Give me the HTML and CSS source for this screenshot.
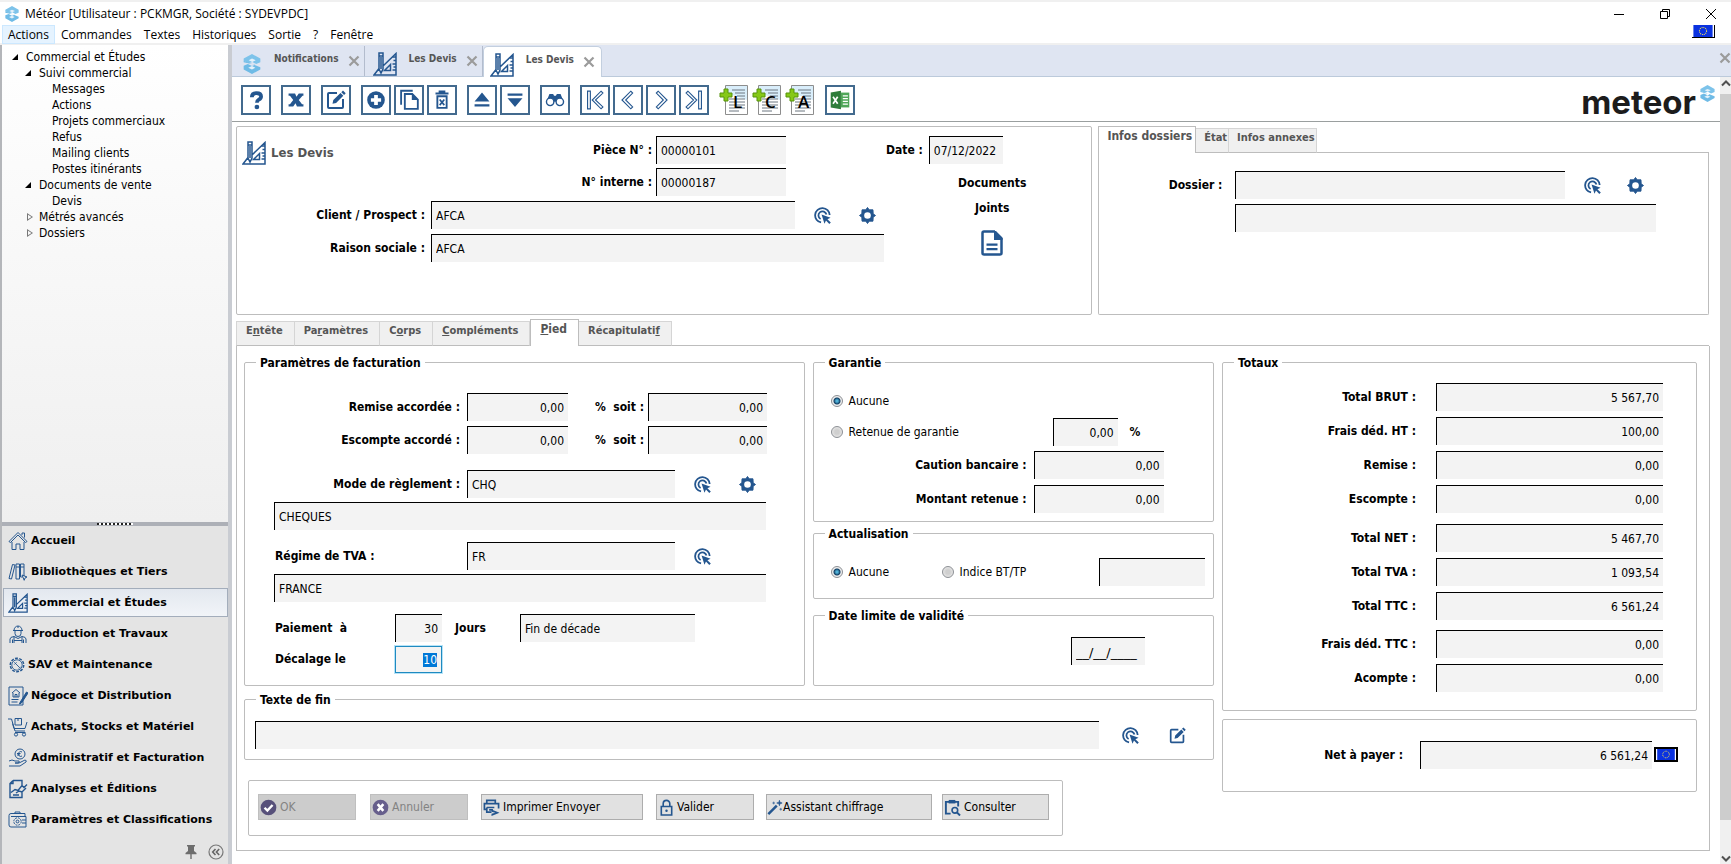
FILE: index.html
```html
<!DOCTYPE html>
<html lang="fr">
<head>
<meta charset="utf-8">
<title>Météor</title>
<link rel="stylesheet" href="styles.css">
</head>
<body>
<svg class="sprite" aria-hidden="true">
  <symbol id="logo" viewBox="0 0 24 24"><path d="M12 0 22 5.500V10L17 12 12.500 9.500 8 11 2 8V5.500Z" fill="#7dc3ea"/><path d="M2 8 22 16v2.500L12 24 2 18.500V14l5-2 5 2.500 4-1.500L2 10Z" fill="#6fbbe6"/><path d="M8 7.500 12 5.500 16.500 7.500 12.300 9.500ZM7.500 16.500 12 14.500 16 16.500 12 18.600Z" fill="#e4f1fa"/></symbol>
  <symbol id="square" viewBox="0 0 24 24"><g fill="none" stroke="#24568f" stroke-width="1.500"><path d="M6 1h4v16l-2 4-2-4ZM6 4h4M8 5v12M6 16.500 1 23h22V1.500L10 14"/><path d="M17.500 12.500v6h-6Z"/><path d="M19.500 5H23M20.500 8.500H23M19.500 12H23M20.500 15H23M19.500 18H23"/></g></symbol>
  <symbol id="cross" viewBox="0 0 12 12"><path d="M1.500 1.500l9 9M10.500 1.500l-9 9" stroke="#9b9b9b" stroke-width="2.200" fill="none"/></symbol>
  <symbol id="pick" viewBox="0 0 18 18"><g fill="none" stroke="#24568f" stroke-width="1.900"><path d="M7.500 16.400A7.700 7.700 0 1 1 16.600 8.500"/><path d="M7 12.700A4.300 4.300 0 1 1 13.200 8"/></g><path d="M8 8l9.500 3.300-3.300 1.600 3.600 3.600-1.600 1.500-3.500-3.600-1.600 3.300Z" fill="#24568f"/></symbol>
  <symbol id="gear" viewBox="0 0 18 18"><path d="M9 .5 10.800 3 14.800 3 15 7.200 17.500 9 15 10.800 14.800 15 10.800 15 9 17.500 7.200 15 3.200 15 3 10.800.5 9 3 7.200 3.200 3 7.200 3Z" fill="#24568f" stroke="#24568f" stroke-linejoin="round"/><circle cx="9" cy="9" r="3.500" fill="#fff"/></symbol>
  <symbol id="edit" viewBox="0 0 20 20"><path d="M11 3H3q-1 0-1 1v13q0 1 1 1h13q1 0 1-1V9" fill="none" stroke="#24568f" stroke-width="2"/><path d="M6.500 13.800l.8-3.700L14.500 3l2.800 2.800-7.200 7.200ZM15.300 2.200 17 .6l2.700 2.700-1.600 1.700Z" fill="#24568f"/></symbol>
  <symbol id="flag" viewBox="0 0 24 15"><path fill="#0a32e0" d="M0 0h24v15H0z"/><circle cx="12" cy="7.500" r="4.500" fill="none" stroke="#ffe94a" stroke-width="1.300" stroke-dasharray="1.200 1.156"/></symbol>
  <symbol id="sheet" viewBox="0 0 30 30"><path d="M6.500.5h22v29h-22z" fill="#fff" stroke="#8d8d8d"/><path d="M7 1h21v14L7 8Z" fill="#d9eefb"/><path d="M13 5h13M16 8h10M18 11h8M10 14h16M10 17h16M10 20h16M10 23h16M10 26h10" stroke="#6c7780"/><path d="M5 4h4v4h4v4H9v4H5v-4H1V8h4Z" fill="#86c818" stroke="#57930c"/></symbol>
</svg>

<header class="titlebar">
  <div class="titlebar-left">
    <div class="caption"><svg class="i16"><use href="#logo"/></svg><span>Météor [Utilisateur : PCKMGR, Société : SYDEVPDC]</span></div>
    <nav class="menubar" aria-label="Menu">
      <a class="on" href="#">Actions</a><a href="#">Commandes</a><a href="#">Textes</a><a href="#">Historiques</a><a href="#">Sortie</a><a href="#">?</a><a href="#">Fenêtre</a>
    </nav>
  </div>
  <div class="titlebar-right">
    <div class="winctl">
      <button aria-label="Réduire"><svg viewBox="0 0 12 12"><path d="M1 6.500h10" stroke="#000"/></svg></button>
      <button aria-label="Restaurer"><svg viewBox="0 0 12 12"><path d="M1.500 3.500h7v7h-7zM3.500 3.500v-2h7v7h-2" fill="none" stroke="#000"/></svg></button>
      <button aria-label="Fermer"><svg viewBox="0 0 12 12"><path d="M1 1l10 10M11 1 1 11" stroke="#000" fill="none"/></svg></button>
    </div>
    <svg class="euro-flag"><use href="#flag"/></svg>
  </div>
</header>

<div class="workspace">
  <aside class="sidebar">
    <ul class="tree">
      <li class="l0 open">Commercial et Études</li>
      <li class="l1 open">Suivi commercial</li>
      <li class="l2">Messages</li>
      <li class="l2">Actions</li>
      <li class="l2">Projets commerciaux</li>
      <li class="l2">Refus</li>
      <li class="l2">Mailing clients</li>
      <li class="l2">Postes itinérants</li>
      <li class="l1 open">Documents de vente</li>
      <li class="l2">Devis</li>
      <li class="l1 shut">Métrés avancés</li>
      <li class="l1 shut">Dossiers</li>
    </ul>
    <div class="grip"><span></span></div>
    <nav class="modules" aria-label="Modules">
      <a href="#"><svg viewBox="0 0 20 20"><path d="M1 10.500 10 1.500l9 9-1.500 1L10 4l-7.500 7.500ZM4 11v7.500h4V13h4v5.500h4V11M14 4V2h2.500v4.500"/></svg>Accueil</a>
      <a href="#"><svg viewBox="0 0 20 20"><path d="M4.500 2.500 7 3 3.500 17 1 16.500ZM8 2h3.500v15H8zM12.500 2H16v12M12.500 2v13h2M8 5h3.500M12.500 5H16M14 13l5 2-2 1-.8 2.300Z"/></svg>Bibliothèques et Tiers</a>
      <a class="on" href="#"><svg><use href="#square"/></svg>Commercial et Études</a>
      <a href="#"><svg viewBox="0 0 20 20"><path d="M6 6.500a4 4.500 0 0 1 8 0ZM5 6.500h10M7 7v2.500a3 3 0 0 0 6 0V7M10 2v2M2 19v-4q0-2 4-2.500l4 2 4-2q4 .5 4 2.500v4M6 12.500V19M14 12.500V19M6 16.500h8M4.500 15.500V19M15.500 15.500V19"/></svg>Production et Travaux</a>
      <a class="tight" href="#"><svg viewBox="0 0 20 20"><circle cx="10" cy="10" r="7.500" stroke-dasharray="3.200 1.500" stroke-width="1.600"/><circle cx="10" cy="10" r="5.800"/><path d="M7 7l6 6M7 9.500 9.500 7M12 14l2-2"/></svg>SAV et Maintenance</a>
      <a href="#"><svg viewBox="0 0 20 20"><path d="M1 1h14v18H1zM4 7l4-3.500L12 7M5 7v4h6V7M7 11V8.500h2V11M3.500 13.500h7M3.500 16h6"/><path d="M18.500 6 12 16.500l-.5 1.500 2-1L20 7Z" fill="#24568f"/></svg>Négoce et Distribution</a>
      <a href="#"><svg viewBox="0 0 20 20"><path d="M0 2h3.500L7 14h10M4.500 6.500 6 11.500h11L19 5M7 15.500h10.500M7 1.500h6.500V8H7zM10 1.500V4"/><circle cx="8" cy="17.500" r="1.600"/><circle cx="16" cy="17.500" r="1.600"/></svg>Achats, Stocks et Matériel</a>
      <a href="#"><svg viewBox="0 0 20 20"><circle cx="12" cy="6" r="5"/><path d="M14 4q-3-1.500-3.500 2 .5 3.500 3.500 2M9 5.500h3.500M9 7h3M1 13q3-2 6 0h4q1 1.500-1 2H7h4l6-3q2 .5 1 2l-6 4H1"/></svg>Administratif et Facturation</a>
      <a href="#"><svg viewBox="0 0 20 20"><path d="M5 1.500h9v6M5 1.500 2 4.500v14h12v-5M5 1.500v3H2M5 16h6M3 13.500l4-3 3 1 4-5 2 2 3-3M8 14l3-2 3 1 4-4" stroke-width="1.400"/></svg>Analyses et Éditions</a>
      <a href="#"><svg viewBox="0 0 20 20"><path d="M1 5.500q0-2 2-2h14v3M1 5.500V15q0 2 2 2h15V6.500H3M7 3V2h5v1.500M14 10h4M14 13h4"/><circle cx="9.500" cy="11.500" r="3.700" stroke-dasharray="1.900 1"/><circle cx="9.500" cy="11.500" r="1.400"/></svg>Paramètres et Classifications</a>
    </nav>
    <div class="side-foot">
      <svg viewBox="0 0 14 16"><path d="M3 1h8v1.500h-1V7l2.500 2v1.300H7.700V15H6.300v-4.700H1.500V9L4 7V2.500H3Z" fill="#6d6d6d"/></svg>
      <svg viewBox="0 0 16 16"><circle cx="8" cy="8" r="7" fill="none" stroke="#777" stroke-width="1.200"/><path d="M7.500 5 4.700 8l2.800 3M11.200 5 8.400 8l2.800 3" fill="none" stroke="#666" stroke-width="1.600"/></svg>
    </div>
  </aside>

  <main class="main">
    <div class="doctabs">
      <div class="doctab"><svg class="i20"><use href="#logo"/></svg><span>Notifications</span><svg class="x"><use href="#cross"/></svg></div>
      <div class="doctab"><svg class="i24"><use href="#square"/></svg><span>Les Devis</span><svg class="x"><use href="#cross"/></svg></div>
      <div class="doctab on"><svg class="i24"><use href="#square"/></svg><span>Les Devis</span><svg class="x"><use href="#cross"/></svg></div>
      <svg class="x end"><use href="#cross"/></svg>
    </div>

    <div class="viewport">
      <div class="page">
        <div class="toolbar">
          <div class="tg"><button class="tb" aria-label="Aide"><svg viewBox="0 0 28 28"><path d="M9.500 11q0-4.500 5-4.500t5 3.700q0 2.200-2.500 3.500-2 1.100-2 3.300" fill="none" stroke="#24568f" stroke-width="4"/><circle cx="15" cy="21.500" r="2.500" fill="#24568f"/></svg></button></div>
          <div class="tg"><button class="tb" aria-label="Fermer"><svg viewBox="0 0 28 28"><path d="M6 7h7l1.500 3.500L17 7h5v2.500h-1L17 14l3.500 4.500H22V21h-7l-1.500-3.500L11 21H6v-2.500h1.500L11 14 7.500 9.500H6Z" fill="#24568f"/></svg></button></div>
          <div class="tg"><button class="tb" aria-label="Modifier"><svg viewBox="-3 -3 26 26"><use href="#edit" width="20" height="20"/></svg></button></div>
          <div class="tg">
            <button class="tb" aria-label="Ajouter"><svg viewBox="0 0 28 28"><circle cx="14" cy="14" r="9.500" fill="#24568f"/><path d="M14 8.500v11M8.500 14h11" stroke="#fff" stroke-width="4"/></svg></button>
            <button class="tb" aria-label="Copier"><svg viewBox="0 0 28 28"><path d="M5.500 19V4H18M9.500 7.500h8l6 6v10h-14Z" fill="none" stroke="#24568f" stroke-width="2"/><path d="M17 7v7h7Z" fill="#24568f"/></svg></button>
            <button class="tb" aria-label="Supprimer"><svg viewBox="0 0 28 28"><path d="M7 7h14M11.500 6V5h5v1" stroke="#24568f" stroke-width="2.200" fill="none"/><path d="M9 10h10v12.500H9z" fill="none" stroke="#24568f" stroke-width="2"/><path d="M11.500 13.500l5 6M16.500 13.500l-5 6" stroke="#24568f" stroke-width="1.800"/></svg></button>
          </div>
          <div class="tg">
            <button class="tb" aria-label="Monter"><svg viewBox="0 0 28 28"><path d="M14 6l8 9.500H6ZM6 18.500h16v2.500H6z" fill="#24568f"/></svg></button>
            <button class="tb" aria-label="Descendre"><svg viewBox="0 0 28 28"><path d="M14 21.500 6 12h16ZM6 7h16v2.500H6z" fill="#24568f"/></svg></button>
          </div>
          <div class="tg"><button class="tb" aria-label="Rechercher"><svg viewBox="0 0 28 28"><path d="M8 7.500h4l1 2h2l1-2h4L23 15l-9 1-9-1Z" fill="#24568f"/><circle cx="8.800" cy="16" r="4" fill="#fff" stroke="#24568f" stroke-width="1.500"/><circle cx="19.200" cy="16" r="4" fill="#fff" stroke="#24568f" stroke-width="1.500"/></svg></button></div>
          <div class="tg nav">
            <button class="tb" aria-label="Premier"><svg viewBox="0 0 28 28"><path d="M6 4.500h3v19H6zM20.500 4.500l2 2-8 7.500 8 7.500-2 2-9.500-9.500Z"/></svg></button>
            <button class="tb" aria-label="Précédent"><svg viewBox="0 0 28 28"><path d="M17 4.500l2 2-7.500 7.500 7.500 7.500-2 2L7.500 14Z"/></svg></button>
            <button class="tb" aria-label="Suivant"><svg viewBox="0 0 28 28"><path d="M11 4.500l-2 2 7.500 7.500L9 21.500l2 2 9.500-9.500Z"/></svg></button>
            <button class="tb" aria-label="Dernier"><svg viewBox="0 0 28 28"><path d="M19 4.500h3v19h-3zM7.500 4.500l-2 2 8 7.500-8 7.500 2 2 9.500-9.500Z"/></svg></button>
          </div>
          <div class="tg">
            <button class="tl"><svg><use href="#sheet"/></svg><b>L</b></button>
            <button class="tl"><svg><use href="#sheet"/></svg><b>C</b></button>
            <button class="tl"><svg><use href="#sheet"/></svg><b>A</b></button>
          </div>
          <div class="tg"><button class="tb" aria-label="Excel"><svg viewBox="0 0 28 28"><path d="M15 6h9v16h-9z" fill="#4fa659"/><path d="M17 9.500h5.500M17 12.500h5.500M17 15.500h5.500M17 18.500h5.500" stroke="#fff" stroke-width="1.400"/><path d="M4 6l11-2v20L4 22Z" fill="#2e7d3a"/><path d="M6.500 10.500l5 7.500M11.500 10.500l-5 7.500" stroke="#fff" stroke-width="1.800"/></svg></button></div>
          <div class="brand"><span>meteor</span><svg><use href="#logo"/></svg></div>
        </div>

        <div class="top">
          <section class="box head">
            <h1><svg class="i24"><use href="#square"/></svg>Les Devis</h1>
            <div class="head-l">
              <div class="ids">
                <div class="row"><label for="piece">Pièce N° :</label><input id="piece" class="w130" value="00000101"></div>
                <div class="row"><label for="interne">N° interne :</label><input id="interne" class="w130" value="00000187"></div>
              </div>
              <div class="row"><label class="lw" for="client">Client / Prospect :</label><input id="client" class="w364" value="AFCA"><button class="ib g19" aria-label="Choisir"><svg><use href="#pick"/></svg></button><button class="ib g28" aria-label="Options"><svg><use href="#gear"/></svg></button></div>
              <div class="row"><label class="lw" for="raison">Raison sociale :</label><input id="raison" class="grow" value="AFCA"></div>
            </div>
            <div class="head-r">
              <div class="row"><label for="date">Date :</label><input id="date" class="w74" value="07/12/2022"></div>
              <div class="joints"><span>Documents</span><span>Joints</span><button class="ib" aria-label="Documents joints"><svg viewBox="0 0 22 26"><path d="M14 1.500H3q-1.500 0-1.500 1.500v20q0 1.500 1.500 1.500h16q1.500 0 1.500-1.500V8" fill="none" stroke="#24568f" stroke-width="2.500"/><path d="M13 1h2l6.500 6.500V10H13ZM5.500 13.500h11v2.300h-11zM5.500 18h11v2.300h-11z" fill="#24568f"/></svg></button></div>
            </div>
          </section>

          <section class="infos">
            <div class="tabs infotabs"><button class="tab on">Infos dossiers</button><button class="tab">État</button><button class="tab">Infos annexes</button><i></i></div>
            <div class="tabbody">
              <div class="row"><label for="dossier">Dossier :</label><input id="dossier" class="grow"><button class="ib g19" aria-label="Choisir"><svg><use href="#pick"/></svg></button><button class="ib g28" aria-label="Options"><svg><use href="#gear"/></svg></button></div>
              <div class="row second"><input class="grow" aria-label="Libellé dossier"></div>
            </div>
          </section>
        </div>

        <div class="tabs maintabs"><button class="tab">E<u>n</u>tête</button><button class="tab">Pa<u>r</u>amètres</button><button class="tab">C<u>o</u>rps</button><button class="tab"><u>C</u>ompléments</button><button class="tab on"><u>P</u>ied</button><button class="tab">Récapitulati<u>f</u></button><i></i></div>
        <div class="pied">
          <div class="pied-l">
            <fieldset class="fact">
              <legend>Paramètres de facturation</legend>
              <div class="row"><label class="lf" for="r1">Remise accordée :</label><input id="r1" class="num w101" value="0,00"><label class="ls" for="r2">%&nbsp; soit :</label><input id="r2" class="num w119" value="0,00"></div>
              <div class="row"><label class="lf" for="e1">Escompte accordé :</label><input id="e1" class="num w101" value="0,00"><label class="ls" for="e2">%&nbsp; soit :</label><input id="e2" class="num w119" value="0,00"></div>
              <div class="row m16"><label class="lf" for="mode">Mode de règlement :</label><input id="mode" class="w208" value="CHQ"><button class="ib g19" aria-label="Choisir"><svg><use href="#pick"/></svg></button><button class="ib g28" aria-label="Options"><svg><use href="#gear"/></svg></button></div>
              <div class="row wide"><input class="w492" aria-label="Libellé du mode" value="CHEQUES"></div>
              <div class="row m12"><label class="ll" for="tva">Régime de TVA :</label><input id="tva" class="w208" value="FR"><button class="ib g19" aria-label="Choisir"><svg><use href="#pick"/></svg></button></div>
              <div class="row wide m4"><input class="w492" aria-label="Libellé du régime" value="FRANCE"></div>
              <div class="row m12"><label class="lp" for="jours">Paiement&nbsp; à</label><input id="jours" class="num w47" value="30"><span class="txt">Jours</span><input class="w175" aria-label="Terme" value="Fin de décade"></div>
              <div class="row"><label class="lp" for="decal">Décalage le</label><input id="decal" class="num w47 active" value="10"></div>
            </fieldset>
            <div class="mid">
              <fieldset class="gar">
                <legend>Garantie</legend>
                <label class="radio"><input type="radio" name="g" checked>Aucune</label>
                <div class="row"><label class="radio"><input type="radio" name="g">Retenue de garantie</label><input class="num w65" aria-label="Taux de retenue" value="0,00"><span class="pct">%</span></div>
                <div class="row m5"><label class="lg" for="caution">Caution bancaire :</label><input id="caution" class="num w130" value="0,00"></div>
                <div class="row m6"><label class="lg" for="montant">Montant retenue :</label><input id="montant" class="num w130" value="0,00"></div>
              </fieldset>
              <fieldset class="act">
                <legend>Actualisation</legend>
                <div class="row"><label class="radio"><input type="radio" name="a" checked>Aucune</label><label class="radio"><input type="radio" name="a">Indice BT/TP</label><input class="w106" aria-label="Indice"></div>
              </fieldset>
              <fieldset class="val">
                <legend>Date limite de validité</legend>
                <div class="row"><input class="w74 mask" aria-label="Date limite" value="__/__/____"></div>
              </fieldset>
            </div>
            <fieldset class="fin">
              <legend>Texte de fin</legend>
              <div class="row"><input class="grow" aria-label="Texte de fin"><button class="ib g23" aria-label="Choisir"><svg><use href="#pick"/></svg></button><button class="ib g31" aria-label="Modifier"><svg><use href="#edit"/></svg></button></div>
            </fieldset>
            <div class="box actions">
              <button class="btn w98" disabled><svg viewBox="0 0 18 18"><circle cx="9" cy="9" r="8.300" fill="#57507a"/><path d="M4.800 9.300l3 3 5.500-6" fill="none" stroke="#fff" stroke-width="2.500"/></svg>OK</button>
              <button class="btn w98 b2" disabled><svg viewBox="0 0 18 18"><circle cx="9" cy="9" r="8.300" fill="#675f8c"/><path d="M6 5.500l6 7M12 5.500l-6 7" fill="none" stroke="#fff" stroke-width="2.700"/></svg>Annuler</button>
              <button class="btn w162 b3"><svg viewBox="0 0 18 18"><path d="M4 4.500V1.500h9v3M3.500 11H1.500V5h15v5M4 9h8M4 9v5h5M6.500 11.500h4" fill="none" stroke="#24568f" stroke-width="1.800"/><path d="M9 11l8.500 3.500L9 18v-2.500l4-1-4-1Z" fill="#24568f"/></svg>Imprimer Envoyer</button>
              <button class="btn w98 b4"><svg viewBox="0 0 18 18"><path d="M3.500 8h11v9h-11zM5.500 8V5a3.500 3.500 0 0 1 7 0v3" fill="none" stroke="#24568f" stroke-width="1.700"/><circle cx="9" cy="12.500" r="1.300" fill="#24568f"/></svg>Valider</button>
              <button class="btn w166 b5"><svg viewBox="0 0 18 18"><path d="M1.500 17 11 7.500" stroke="#24568f" stroke-width="2.800"/><path d="M14 1.500l.7 2.300 2.300.7-2.300.7-.7 2.300-.7-2.300-2.300-.7 2.300-.7ZM7.500 3v3M6 4.500h3M15.500 10v3M14 11.500h3" fill="#24568f" stroke="#24568f" stroke-width=".8"/></svg>Assistant chiffrage</button>
              <button class="btn w107 b6"><svg viewBox="0 0 18 18"><path d="M7 15.500H2V3h13v5M5 3.500h7" fill="none" stroke="#24568f" stroke-width="2"/><path d="M5 1h7v3.500H5z" fill="#24568f"/><circle cx="11.500" cy="12" r="3" fill="none" stroke="#24568f" stroke-width="1.700"/><path d="M13.500 14l3.500 3.500" stroke="#24568f" stroke-width="2"/></svg>Consulter</button>
            </div>
          </div>
          <div class="pied-r">
            <fieldset class="tot">
              <legend>Totaux</legend>
              <div class="row"><label for="t1">Total BRUT :</label><input id="t1" class="num" value="5 567,70"></div>
              <div class="row"><label for="t2">Frais déd. HT :</label><input id="t2" class="num" value="100,00"></div>
              <div class="row"><label for="t3">Remise :</label><input id="t3" class="num" value="0,00"></div>
              <div class="row"><label for="t4">Escompte :</label><input id="t4" class="num" value="0,00"></div>
              <div class="row m5"><label for="t5">Total NET :</label><input id="t5" class="num" value="5 467,70"></div>
              <div class="row"><label for="t6">Total TVA :</label><input id="t6" class="num" value="1 093,54"></div>
              <div class="row"><label for="t7">Total TTC :</label><input id="t7" class="num" value="6 561,24"></div>
              <div class="row m4"><label for="t8">Frais déd. TTC :</label><input id="t8" class="num" value="0,00"></div>
              <div class="row"><label for="t9">Acompte :</label><input id="t9" class="num" value="0,00"></div>
            </fieldset>
            <div class="box net"><label for="net">Net à payer :</label><input id="net" class="num" value="6 561,24"><svg class="netflag"><use href="#flag"/></svg></div>
          </div>
        </div>
      </div>
      <div class="scrollbar" aria-hidden="true"><svg viewBox="0 0 10 10"><path d="M1 7l4-4 4 4" fill="none" stroke="#505050" stroke-width="2"/></svg><span></span><svg viewBox="0 0 10 10"><path d="M1 3l4 4 4-4" fill="none" stroke="#505050" stroke-width="2"/></svg></div>
    </div>
  </main>
</div>
<script src="app.js"></script>
</body>
</html>
```
FILE: styles.css
```css
* { box-sizing: border-box; }
body {
  margin: 0;
  min-height: 100vh;
  display: flex;
  flex-direction: column;
  border-top: 2px solid #f0f0f0;
  background: #fff;
  color: #000;
  font: 12px/16px "DejaVu Sans Condensed", "Noto Sans", sans-serif;
}
.sprite { position: absolute; width: 0; height: 0; }
button, input { font: inherit; color: inherit; margin: 0; }
button { padding: 0; border: 0; background: none; }
a { color: inherit; text-decoration: none; }
svg { display: block; flex: none; }

.titlebar { display: flex; justify-content: space-between; height: 43px; font-family: "Open Sans", "Noto Sans", sans-serif; border-bottom: 2px solid #f0f0f0; }
.caption { display: flex; align-items: center; gap: 5px; height: 23px; padding-left: 4px; }
.i16 { width: 16px; height: 16px; }
.i20 { width: 20px; height: 24px; }
.i24 { width: 24px; height: 24px; }
.menubar { display: flex; padding-left: 2px; }
.menubar a { padding: 0 5px; border: 1px solid transparent; line-height: 17px; }
.menubar .on { background: #e5f3ff; border-color: #cce8ff; }
.titlebar-right { display: flex; flex-direction: column; align-items: flex-end; padding-right: 14px; }
.winctl { display: flex; gap: 34px; height: 23px; align-items: center; }
.winctl svg { width: 12px; height: 12px; }
.euro-flag { width: 23px; height: 13px; margin-right: 2px; border-right: 1px solid #000; border-bottom: 1px solid #000; }

.workspace { flex: 1; display: flex; }
.sidebar { width: 232px; flex: none; display: flex; flex-direction: column; border-left: 2px solid #b4b6ba; border-right: 4px solid #c9ccd2; }
.tree { flex: 1; margin: 0; padding: 4px 0 0; list-style: none; background: linear-gradient(#fff, #efefef); }
.tree li { display: flex; align-items: center; height: 16px; }
.tree .l0 { padding-left: 9px; }
.tree .l1 { padding-left: 22px; }
.tree .l2 { padding-left: 50px; }
.open::before { content: ""; width: 0; height: 0; margin: 0 8px 0 1px; border-bottom: 6px solid #000; border-left: 6px solid transparent; }
.shut::before { content: ""; width: 6px; height: 8px; margin: 0 6px 0 3px; background: #777; clip-path: polygon(0 0, 100% 50%, 0 100%, 0 12%, 17% 22%, 17% 78%, 75% 50%, 0 12%); }
.grip { height: 4px; background: #adb0b7; display: flex; justify-content: center; align-items: center; }
.grip span { width: 36px; height: 2px; background: repeating-linear-gradient(90deg, #222 0 2px, #fff 2px 4px); }
.modules { background: #e4e4e4; font: bold 11px/29px "DejaVu Sans", sans-serif; }
.modules a { display: flex; align-items: center; gap: 3px; height: 29px; margin: 0 0 2px 1px; padding-left: 4px; border: 1px solid transparent; white-space: nowrap; }
.modules .on { border-color: #a3adbb; background: linear-gradient(#e3e8ef, #f1f4f8); }
.modules svg { width: 20px; height: 20px; fill: none; stroke: #24568f; }
.modules .tight { gap: 2px; }
.modules .tight svg { width: 18px; height: 18px; }
.side-foot { display: flex; justify-content: flex-end; gap: 9px; height: 29px; padding: 8px 4px 0 0; background: #e4e4e4; }
.side-foot svg { width: 16px; height: 16px; }

.main { flex: 1; min-width: 0; display: flex; flex-direction: column; }
.doctabs { display: flex; align-items: flex-end; height: 32px; padding-left: 6px; background: #dfe5f2; border-bottom: 1px solid #bccadb; font: bold 10px/16px "DejaVu Sans Condensed", "Noto Sans", sans-serif; color: #555; }
.doctab { display: flex; height: 30px; padding: 5px 4px 0; border-right: 1px solid #b3bccd; }
.doctab span { padding: 0 9px 0 12px; white-space: nowrap; }
.doctab .i20, .doctab .i24 { margin-top: 1px; }
.x { width: 12px; height: 12px; margin-top: 4px; }
.doctab.on { height: 31px; margin-bottom: -1px; padding: 5px 6px 0; background: #fff; border: 1px solid #c3cfdf; border-width: 1px 1px 0; border-radius: 5px 5px 0 0; }
.doctab:nth-child(2) { padding-left: 8px; }
.x.end { margin: 0 0 12px auto; }

.viewport { flex: 1; display: flex; }
.page { flex: 1; min-width: 0; }
.scrollbar { width: 11px; display: flex; flex-direction: column; align-items: center; background: #f0f0f0; }
.scrollbar span { flex: 1; width: 11px; margin: 4px 0 32px; background: #cdcdcd; }
.scrollbar svg { width: 10px; height: 13px; }

.toolbar { display: flex; gap: 10px; height: 45px; padding: 8px 4px 0 9px; border-bottom: 1px solid #9a9f9f; }
.tg { display: flex; gap: 3px; }
.tb { width: 30px; height: 30px; border: 2px solid #436a8e; background: #fff; }
.tb svg { width: 26px; height: 26px; }
.nav path { fill: none; stroke: #24568f; stroke-width: 1.2; }
.tg .tl { display: grid; width: 30px; height: 30px; }
.tl svg, .tl b { grid-area: 1 / 1; }
.tl svg { width: 30px; height: 30px; }
.tl b { font: 600 17px/34px "Open Sans", sans-serif; padding-left: 7px; }
.brand { margin-left: auto; display: flex; font: bold 33px/34px Inter, sans-serif; color: #1c1c1c; gap: 3px; }
.brand svg { width: 17px; height: 17px; }

.box { border: 1px solid #bdbdbd; border-radius: 2px; }
.top { display: grid; grid-template-columns: 857fr 611fr; gap: 6px; margin: 4px 11px 4px 4px; height: 189px; }
.row { display: flex; align-items: center; height: 28px; }
label, .joints, .txt, .pct, legend { font-weight: bold; white-space: nowrap; }
input:not([type]) { min-width: 0; height: 28px; padding: 1px 4px 0; border: 0; border-left: 1px solid #000; border-top: 1px solid #000; border-radius: 0; background: #f3f3f3; outline: 0; }
input.num { text-align: right; }
.grow { flex: 1; }
.w47 { width: 47px; } .w65 { width: 65px; } .w74 { width: 74px; } .w98 { width: 98px; } .w101 { width: 101px; }
.w106 { width: 106px; } .w107 { width: 107px; } .w119 { width: 119px; } .w130 { width: 130px; } .w162 { width: 162px; }
.w166 { width: 166px; } .w175 { width: 175px; } .w208 { width: 208px; } .w364 { width: 364px; } .w492 { width: 492px; }
.ib svg { width: 17px; height: 17px; }
.g19 { margin-left: 19px; } .g23 { margin-left: 23px; } .g28 { margin-left: 28px; } .g31 { margin-left: 30px; }

.head { display: flex; padding-top: 9px; }
.head h1 { display: flex; align-items: center; gap: 5px; width: 0; margin: 5px 0 0 5px; height: 24px; font-size: 13px; color: #555; white-space: nowrap; }
.head-l { width: 642px; display: flex; flex-direction: column; gap: 5px; }
.ids { display: flex; flex-direction: column; gap: 4px; padding-right: 98px; }
.ids .row { justify-content: flex-end; }
.ids label { margin-right: 4px; }
.lw { width: 183px; margin-right: 6px; text-align: right; }
.head-r { display: flex; flex-direction: column; padding-left: 2px; }
.head-r .row { gap: 6px; }
.joints { display: flex; flex-direction: column; align-items: center; gap: 9px; margin: 11px 0 0 72px; }
.joints svg { width: 22px; height: 26px; margin-top: 5px; }

.tabs { display: flex; align-items: flex-end; height: 27px; }
.tabs i { flex: 1; align-self: stretch; border-bottom: 1px solid #bdbdbd; }
.tab { height: 25px; padding: 0 8px 6px; background: #f0f0f0; border: 1px solid #d5d5d5; border-left: 0; border-bottom-color: #bdbdbd; font-weight: bold; font-size: 11px; color: #555; white-space: nowrap; }
.tab.on { height: 27px; background: #fff; border: 1px solid #bdbdbd; border-bottom: 0; padding-bottom: 8px; font-size: 12px; }
.infos { display: flex; flex-direction: column; }
.infotabs .tab { padding-left: 8px; padding-right: 1px; }
.infotabs .on { padding: 0 3px 8px 8px; }
.tabbody { flex: 1; border: 1px solid #bdbdbd; border-top: 0; border-radius: 0 0 2px 2px; padding: 18px 64px 0 0; }
.tabbody label { width: 123px; margin-right: 13px; text-align: right; }
.tabbody .g28 { margin-left: 26px; }
.tabbody .second { margin: 5px -12px 0 136px; }
.maintabs { margin: 0 11px 0 4px; }
.maintabs .tab { padding-left: 9px; padding-right: 11px; }
.maintabs .tab:first-child { border-left: 1px solid #d5d5d5; }

.pied { display: grid; grid-template-columns: 970fr 475fr; gap: 8px; margin: 0 10px 14px 4px; padding: 8px 12px 14px 7px; border: 1px solid #bdbdbd; border-top: 0; }
.pied-l { display: grid; grid-template-columns: 560fr 401fr; gap: 0 8px; align-content: start; }
fieldset { min-width: 0; margin: 0; padding: 0; border: 1px solid #bdbdbd; border-radius: 2px; }
legend { margin-left: 11px; padding: 0 4px; height: 16px; line-height: 18px; }
.fact { padding-top: 23px; height: 332px; }
.fact .row + .row { margin-top: 5px; }
.fact .row.m16 { margin-top: 16px; }
.fact .row.m12 { margin-top: 12px; }
.lf { width: 215px; margin-right: 7px; text-align: right; }
.ls { width: 76px; margin-right: 4px; text-align: right; }
.ll { width: 192px; margin: 0 0 0 30px; }
.lp { width: 120px; margin-left: 30px; }
.wide { padding-left: 29px; }
.fact .row.wide { margin-top: 4px; }
.fact .row:last-child { margin-top: 3px; }
.txt { width: 78px; padding-left: 13px; }
input.active { border: 1px solid #1f8ac0; box-shadow: 0 0 0 1px #b5e3f8; height: 27px; }
.active::selection { background: #0078d7; color: #fff; }

.mid { display: flex; flex-direction: column; }
.radio { display: flex; align-items: center; gap: 6px; font-weight: normal; }
input[type="radio"] { appearance: none; width: 12px; height: 12px; border: 1px solid #8c8f94; border-radius: 50%; background: radial-gradient(#cfcfcf 30%, #f4f4f4); }
input[type="radio"]:checked { background: radial-gradient(circle, #4fb1d8 0 1px, #123e63 3px, #eee 4px); }
.gar { height: 168px; padding-top: 22px; }
.gar .radio { margin-left: 17px; height: 18px; }
.gar .row { margin-top: 8px; }
.gar .row .radio { width: 222px; }
.pct { margin-left: 12px; }
.gar .row.m5 { margin-top: 5px; }
.gar .row.m6 { margin-top: 6px; }
.lg { width: 213px; margin-right: 7px; text-align: right; }
.act { height: 74px; margin-top: 3px; padding: 17px 8px 0 17px; }
.act legend { margin-left: -6px; }
.act .radio { width: 111px; }
.act .radio + input { margin-left: auto; }
.val { height: 79px; margin-top: 8px; padding: 14px 68px 0 0; }
.val .row { justify-content: flex-end; }
.val .mask { font-family: "DejaVu Sans", sans-serif; font-size: 13px; }
.fin { grid-column: 1 / -1; height: 69px; margin-top: 5px; padding: 14px 27px 0 10px; }
.fin legend { margin-left: 1px; }
.actions { grid-column: 1 / -1; justify-self: start; display: flex; height: 56px; margin: 20px 0 0 4px; padding: 13px 13px 0 9px; }
.btn { display: flex; align-items: center; gap: 3px; height: 26px; padding-left: 1px; background: #e1e1e1; border: 1px solid #adadad; white-space: nowrap; }
.btn:disabled { background: #ccc; border-color: #bfbfbf; color: #838383; }
.btn svg { width: 17px; height: 17px; }
.b2 { margin-left: 14px; } .b3, .b4 { margin-left: 13px; } .b5 { margin-left: 12px; } .b6 { margin-left: 10px; }
.btn.b4 { gap: 2px; }
.btn.b5 { gap: 0; padding-left: 0; }
.btn.b5 svg { width: 16px; height: 16px; }

.tot { height: 357px; padding: 13px 33px 0 0; }
.tot .row + .row { margin-top: 6px; }
.tot .row.m5 { margin-top: 11px; }
.tot .row.m4 { margin-top: 10px; }
.tot label { flex: 1; text-align: right; margin-right: 20px; }
.tot input { width: 227px; }
.net { display: flex; height: 73px; margin-top: 8px; padding: 21px 18px 0 0; line-height: 28px; }
.net label { flex: 1; text-align: right; margin-right: 17px; }
.net input { width: 232px; }
.netflag { width: 24px; height: 15px; margin: 6px 0 0 2px; border: 2px solid #000; }
```
FILE: app.js
```js
document.getElementById("decal").select();
```
